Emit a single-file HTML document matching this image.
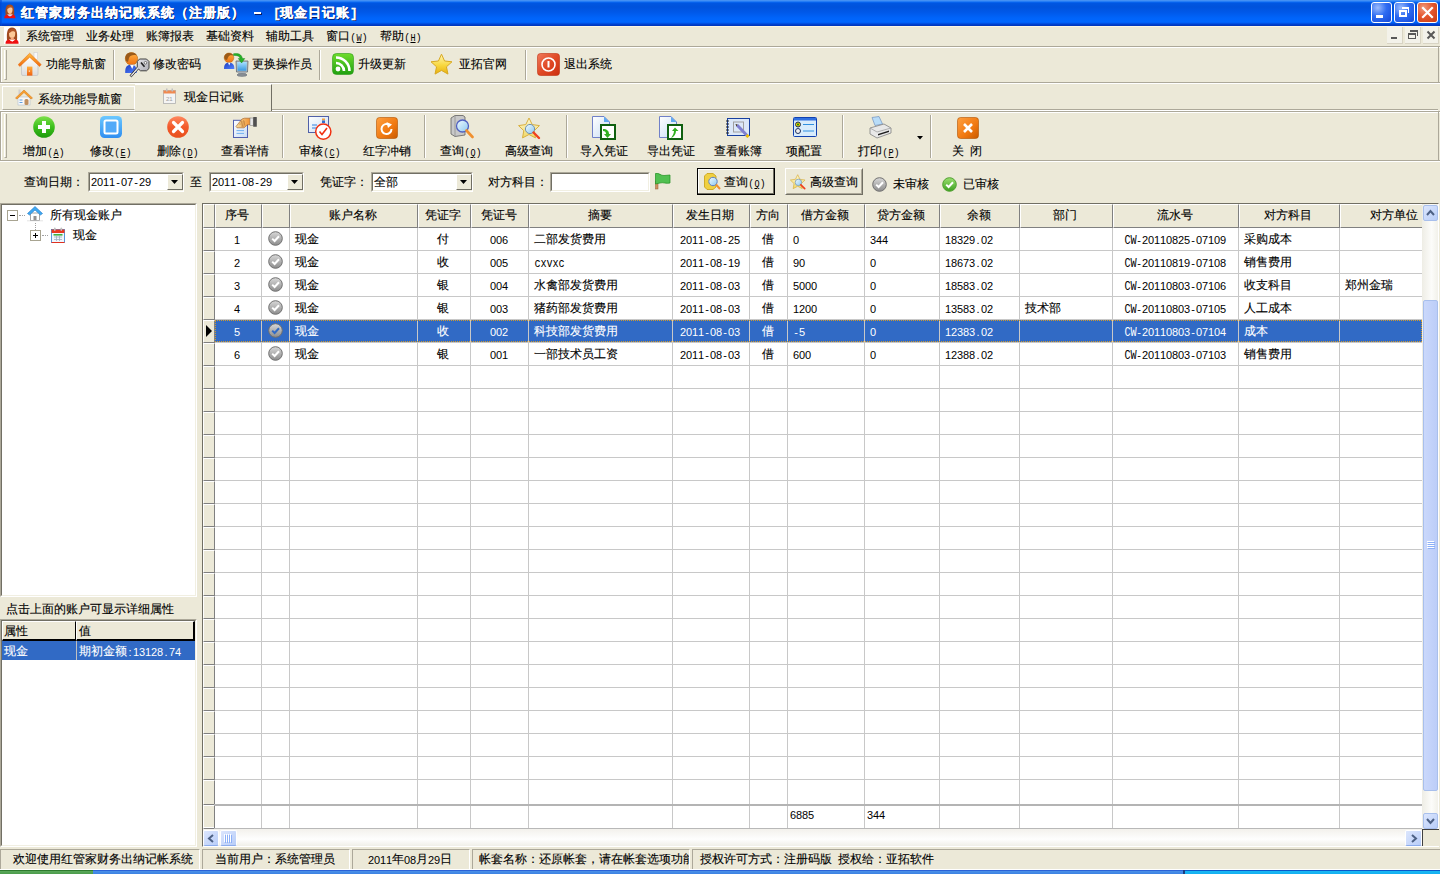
<!DOCTYPE html><html><head><meta charset="utf-8"><style>
html,body{margin:0;padding:0;}
body{width:1440px;height:874px;position:relative;overflow:hidden;background:#ECE9D8;font-family:"Liberation Sans",sans-serif;font-size:12px;color:#000;}
div{position:absolute;box-sizing:border-box;}
.t{white-space:nowrap;line-height:12px;height:12px;-webkit-text-stroke:0.12px currentColor;}
.c{display:inline-block;width:6px;text-align:center;position:relative;top:1px;font-size:11px;-webkit-text-stroke:0;}.m{font-family:'Liberation Mono',monospace;font-size:12px;transform:scaleX(.85);}
svg{position:absolute;}
</style></head><body>
<svg width="0" height="0" style="position:absolute;left:0;top:0">
<defs>
<linearGradient id="gGreen" x1="0" y1="0" x2="0" y2="1"><stop offset="0" stop-color="#7de04a"/><stop offset=".5" stop-color="#3cbf1c"/><stop offset="1" stop-color="#1e9a0c"/></linearGradient>
<linearGradient id="gRss" x1="0" y1="0" x2="0" y2="1"><stop offset="0" stop-color="#6fdc2c"/><stop offset="1" stop-color="#1fa010"/></linearGradient>
<linearGradient id="gBlue" x1="0" y1="0" x2="0" y2="1"><stop offset="0" stop-color="#6cc8ff"/><stop offset="1" stop-color="#2f8ef0"/></linearGradient>
<linearGradient id="gRed" x1="0" y1="0" x2="0" y2="1"><stop offset="0" stop-color="#ff8a60"/><stop offset=".5" stop-color="#f25a2c"/><stop offset="1" stop-color="#e8501c"/></linearGradient>
<linearGradient id="gPower" x1="0" y1="0" x2="1" y2="1"><stop offset="0" stop-color="#f07a5c"/><stop offset=".5" stop-color="#e04a26"/><stop offset="1" stop-color="#cc3010"/></linearGradient>
<linearGradient id="gOrange" x1="0" y1="0" x2="1" y2="1"><stop offset="0" stop-color="#ffa040"/><stop offset=".6" stop-color="#f07810"/><stop offset="1" stop-color="#c85a00"/></linearGradient>
<linearGradient id="gStar" x1="0" y1="0" x2="0" y2="1"><stop offset="0" stop-color="#fff6b8"/><stop offset=".55" stop-color="#f8d840"/><stop offset="1" stop-color="#e8b010"/></linearGradient>
<linearGradient id="gStarL" x1="0" y1="0" x2="0" y2="1"><stop offset="0" stop-color="#fff8d0"/><stop offset="1" stop-color="#f0d868"/></linearGradient>
<linearGradient id="gRoof" x1="0" y1="0" x2="0" y2="1"><stop offset="0" stop-color="#ffc040"/><stop offset="1" stop-color="#f06810"/></linearGradient>
<linearGradient id="gWall" x1="0" y1="0" x2="0" y2="1"><stop offset="0" stop-color="#ffffff"/><stop offset="1" stop-color="#dcdcdc"/></linearGradient>
<linearGradient id="gGray" x1="0" y1="0" x2="0" y2="1"><stop offset="0" stop-color="#d8d8d8"/><stop offset="1" stop-color="#8c8c8c"/></linearGradient>
<linearGradient id="gGreenC" x1="0" y1="0" x2="0" y2="1"><stop offset="0" stop-color="#9be070"/><stop offset="1" stop-color="#3ca020"/></linearGradient>
<linearGradient id="gDoc" x1="0" y1="0" x2="1" y2="1"><stop offset="0" stop-color="#ffffff"/><stop offset="1" stop-color="#c8dcf4"/></linearGradient>
<linearGradient id="gLens" x1="0" y1="0" x2="1" y2="1"><stop offset="0" stop-color="#f0faff"/><stop offset="1" stop-color="#8cc8f0"/></linearGradient>
<linearGradient id="gSB" x1="0" y1="0" x2="1" y2="1"><stop offset="0" stop-color="#dfe8fe"/><stop offset="1" stop-color="#b4c8f6"/></linearGradient>
<linearGradient id="gDoor" x1="0" y1="0" x2="0" y2="1"><stop offset="0" stop-color="#ffb040"/><stop offset="1" stop-color="#f06010"/></linearGradient>
<linearGradient id="gHead" x1="0" y1="0" x2="0" y2="1"><stop offset="0" stop-color="#ffb040"/><stop offset="1" stop-color="#f07010"/></linearGradient>
<linearGradient id="gBody" x1="0" y1="0" x2="1" y2="1"><stop offset="0" stop-color="#2040c0"/><stop offset="1" stop-color="#5080ff"/></linearGradient>
<linearGradient id="gKey" x1="0" y1="0" x2="1" y2="1"><stop offset="0" stop-color="#f4f4f8"/><stop offset="1" stop-color="#a0a0a8"/></linearGradient>
<linearGradient id="gScreen" x1="0" y1="0" x2="0" y2="1"><stop offset="0" stop-color="#a8e0ff"/><stop offset="1" stop-color="#3898e0"/></linearGradient>
<linearGradient id="gHand" x1="0" y1="0" x2="1" y2="0"><stop offset="0" stop-color="#f8e0a0"/><stop offset="1" stop-color="#f09030"/></linearGradient>
</defs></svg>
<div style="left:0;top:0;width:1440px;height:26px;background:linear-gradient(#4a94f4 0px,#3d8cf4 1px,#0c6cf6 2px,#0056e2 3px,#0052dc 7px,#0058e8 12px,#0064fa 18px,#0066ff 22px,#005cf0 23px,#0044d4 24px,#0034b8 26px);"></div>
<div style="left:0;top:0;width:2px;height:26px;background:linear-gradient(90deg,#0040c8,#0050e0 100%);opacity:.6"></div>
<style>.tt{position:absolute;white-space:nowrap;color:#fff;font-weight:bold;font-size:13px;line-height:13px;letter-spacing:1px;-webkit-text-stroke:0.3px #fff;text-shadow:1px 1px 0 #0c1a60;}</style>
<div class="tt" style="left:21px;top:6px">红管家财务出纳记账系统</div>
<div class="tt" style="left:175px;top:6px">（注册版）</div>
<div style="left:254px;top:12px;width:7px;height:2px;background:#fff;box-shadow:1px 1px 0 #0c1a60"></div>
<div class="tt" style="left:273px;top:6px"><span style="font-family:Liberation Mono">[</span></div>
<div class="tt" style="left:280px;top:6px">现金日记账</div>
<div class="tt" style="left:350px;top:6px"><span style="font-family:Liberation Mono">]</span></div>
<div style="left:1371px;top:2px;width:21px;height:21px;border:1px solid #fff;border-radius:3px;background:radial-gradient(circle at 30% 25%,#9cbcfc 0,#2f6df2 45%,#1448d8 100%);"></div>
<div style="left:1394px;top:2px;width:21px;height:21px;border:1px solid #fff;border-radius:3px;background:radial-gradient(circle at 30% 25%,#9cbcfc 0,#2f6df2 45%,#1448d8 100%);"></div>
<div style="left:1417px;top:2px;width:21px;height:21px;border:1px solid #fff;border-radius:3px;background:radial-gradient(circle at 30% 25%,#f09a7c 0,#e5572e 45%,#c83c12 100%);"></div>
<div style="left:1376px;top:15px;width:7px;height:3px;background:#fff"></div>
<div style="left:1399px;top:10px;width:8px;height:7px;border:2px solid #fff;border-top-width:2px"></div>
<div style="left:1402px;top:7px;width:7px;height:6px;border-top:2px solid #fff;border-right:1px solid #fff"></div>
<svg style="left:1417px;top:2px" width="21" height="21"><path d="M6 6 L15 15 M15 6 L6 15" stroke="#fff" stroke-width="2.2" stroke-linecap="square"/></svg>
<div style="left:3px;top:4px;width:14px;height:15px;overflow:hidden"><svg style="left:0px;top:0px" width="14" height="15" viewBox="0 0 14 15"><g transform="scale(0.85)"><path d="M3 13 C2.5 6 3 0.5 8 0.5 C13 0.5 13.5 6 13 13 Z" fill="#a04a1e"/>
<path d="M5 7 C5 3.5 7 2.8 9 2.8 C11 2.8 11.5 5 11.2 7 C11 10 10 11 8.2 11 C6.4 11 5 10 5 7Z" fill="#fcc898"/>
<path d="M4.5 6.5 C5 3 7 1.5 9.5 2 C11.5 2.5 12 4 12.2 6 C11 4.5 9 3.8 7.5 4.5 C6 5.5 5.5 6 4.5 6.5Z" fill="#b05428"/>
<rect x="6.8" y="10.5" width="3" height="2.5" fill="#f8a880"/>
<path d="M1.5 16.8 C1.5 14 2.5 13 5 12.6 L8.2 14.5 L11.4 12.6 C14 13 14.6 14 14.6 16.8 Z" fill="#ee1010"/>
<path d="M5 12.6 L8.2 14.6 L11.4 12.6 L10.5 12.2 L8.2 13.4 L6 12.2Z" fill="#fff"/></g></svg></div>
<div style="left:0px;top:26px;width:1440px;height:1px;background:#faf6e4"></div>
<div style="left:4px;top:27px;width:16px;height:17px;background:#fff"></div>
<svg style="left:4px;top:27px" width="16" height="17" viewBox="0 0 16 17"><path d="M3 13 C2.5 6 3 0.5 8 0.5 C13 0.5 13.5 6 13 13 Z" fill="#a04a1e"/>
<path d="M5 7 C5 3.5 7 2.8 9 2.8 C11 2.8 11.5 5 11.2 7 C11 10 10 11 8.2 11 C6.4 11 5 10 5 7Z" fill="#fcc898"/>
<path d="M4.5 6.5 C5 3 7 1.5 9.5 2 C11.5 2.5 12 4 12.2 6 C11 4.5 9 3.8 7.5 4.5 C6 5.5 5.5 6 4.5 6.5Z" fill="#b05428"/>
<rect x="6.8" y="10.5" width="3" height="2.5" fill="#f8a880"/>
<path d="M1.5 16.8 C1.5 14 2.5 13 5 12.6 L8.2 14.5 L11.4 12.6 C14 13 14.6 14 14.6 16.8 Z" fill="#ee1010"/>
<path d="M5 12.6 L8.2 14.6 L11.4 12.6 L10.5 12.2 L8.2 13.4 L6 12.2Z" fill="#fff"/></svg>
<div class="t" style="left:26px;top:30px;">系统管理</div>
<div class="t" style="left:86px;top:30px;">业务处理</div>
<div class="t" style="left:146px;top:30px;">账簿报表</div>
<div class="t" style="left:206px;top:30px;">基础资料</div>
<div class="t" style="left:266px;top:30px;">辅助工具</div>
<div class="t" style="left:326px;top:30px;">窗口<span class="c" style="font-size:10px">(</span><span class="c m" style="text-decoration:underline;font-size:10px">W</span><span class="c" style="font-size:10px">)</span></div>
<div class="t" style="left:380px;top:30px;">帮助<span class="c" style="font-size:10px">(</span><span class="c m" style="text-decoration:underline;font-size:10px">H</span><span class="c" style="font-size:10px">)</span></div>
<div style="left:1387px;top:27px;width:16px;height:17px;background:#f3f2ea;border-right:1px solid #d8d4c4;border-bottom:1px solid #d8d4c4;"></div>
<div style="left:1405px;top:27px;width:16px;height:17px;background:#f3f2ea;border-right:1px solid #d8d4c4;border-bottom:1px solid #d8d4c4;"></div>
<div style="left:1423px;top:27px;width:16px;height:17px;background:#f3f2ea;border-right:1px solid #d8d4c4;border-bottom:1px solid #d8d4c4;"></div>
<div style="left:1391px;top:37px;width:6px;height:2px;background:#585858"></div>
<div style="left:1408px;top:33px;width:8px;height:6px;border:2px solid #585858;border-width:2px 1px 1px 1px"></div>
<div style="left:1410px;top:30px;width:8px;height:6px;border-top:2px solid #585858;border-right:1px solid #585858"></div>
<svg style="left:1423px;top:27px" width="16" height="17"><path d="M4.5 4.5 L11.5 11.5 M11.5 4.5 L4.5 11.5" stroke="#585858" stroke-width="2"/></svg>
<div style="left:0px;top:46px;width:1440px;height:1px;background:#aca899"></div>
<div style="left:0px;top:46px;width:1px;height:36px;background:#aca899"></div>
<div style="left:1px;top:47px;width:1439px;height:1px;background:#fff"></div>
<div style="left:1px;top:47px;width:1px;height:35px;background:#fff"></div>
<div style="left:0px;top:82px;width:1440px;height:1px;background:#aca899"></div>
<div style="left:0px;top:83px;width:1440px;height:1px;background:#fff"></div>
<div style="left:1438px;top:46px;width:1px;height:36px;background:#aca899"></div>
<div style="left:4px;top:50px;width:3px;height:30px;border-left:1px solid #fff;border-right:1px solid #aca899;border-bottom:1px solid #aca899;"></div>
<div class="t" style="left:46px;top:58px;">功能导航窗</div>
<div class="t" style="left:153px;top:58px;">修改密码</div>
<div class="t" style="left:252px;top:58px;">更换操作员</div>
<div class="t" style="left:358px;top:58px;">升级更新</div>
<div class="t" style="left:459px;top:58px;">亚拓官网</div>
<div class="t" style="left:564px;top:58px;">退出系统</div>
<svg style="left:18px;top:52px" width="24" height="24" viewBox="0 0 24 24"><rect x="16" y="0.5" width="3.6" height="7" fill="#f8f8f8" stroke="#d0d0d0" stroke-width=".6"/>
<path d="M3.5 11 L12 4 L20 11 L20 22 Q20 23.6 18.4 23.6 L5.1 23.6 Q3.5 23.6 3.5 22 Z" fill="url(#gWall)" stroke="#c0c0c0" stroke-width=".7"/>
<path d="M0.2 12.6 L11.7 1.2 L23.2 12.6 L21.6 14.4 L11.7 5.2 L1.8 14.4 Z" fill="url(#gRoof)" stroke="#e87018" stroke-width=".6" stroke-linejoin="round"/>
<rect x="9" y="14.6" width="5.4" height="9" fill="url(#gDoor)"/><rect x="10.8" y="18.5" width="1" height="1.2" fill="#fff"/></svg>
<svg style="left:120px;top:50px" width="32" height="28" viewBox="0 0 32 28"><circle cx="11.5" cy="8.8" r="6.2" fill="url(#gHead)" stroke="#b86a10" stroke-width=".6"/>
<path d="M5.4 9 C5 4 8 2.6 11.5 2.6 C14 2.6 16.2 3.6 16.8 5.5 C14 4.5 10 5 9 8 L8 12 L6 11Z" fill="#9a5a18"/>
<path d="M5.2 23 C5 17.5 6.5 14.8 11 14.8 C15 14.8 16.8 16.5 16.8 23 Z" fill="url(#gBody)"/>
<path d="M10 14.8 L12.2 19 L14 14.8Z" fill="#fff"/>
<path d="M19.5 9 L26.5 9 L29 11.5 L29 18.5 L26.5 20.8 L20.5 20.8 L18.5 19 L11.5 26.8 L10 25.5 L17.3 17 L17.3 11.5 Z" fill="url(#gKey)" stroke="#303030" stroke-width=".9" stroke-linejoin="round"/>
<path d="M21 12.5 L24.5 16.8" stroke="#202020" stroke-width="1.6"/>
<circle cx="25.5" cy="12.8" r="1.3" fill="#fff" stroke="#303030" stroke-width=".6"/>
<path d="M12 25.2 L17.6 18.6" stroke="#fff" stroke-width="1" stroke-dasharray="1 1"/></svg>
<svg style="left:223px;top:52px" width="26" height="25" viewBox="0 0 26 25"><circle cx="6" cy="5.8" r="4.8" fill="url(#gHead)" stroke="#b86a10" stroke-width=".5"/>
<path d="M1.3 6 C1 2.5 3.5 1 6 1 C8 1 9.8 2 10.3 3.6 C8 3 6 3.2 5 5.5 L4 8 L2 7.5Z" fill="#9a5a18"/>
<path d="M1 17 C1 12.5 2.5 10.8 6 10.8 C9.5 10.8 11.4 12.5 11.4 17 Z" fill="url(#gBody)"/>
<path d="M5 10.8 L6.2 13.5 L7.4 10.8Z" fill="#fff"/>
<path d="M13 9 L25 9 L24.5 20 L13.5 20 Z" fill="#b8c0c8" stroke="#606870" stroke-width=".8"/>
<path d="M14.2 10 L23.8 10 L23.4 18.8 L14.6 18.8 Z" fill="url(#gScreen)"/>
<path d="M15.5 20 L22.5 20 L23 22.5 L15 22.5Z" fill="#a8aeb4"/>
<ellipse cx="19" cy="23" rx="5" ry="1.4" fill="#8a9096" stroke="#606870" stroke-width=".5"/>
<path d="M10.5 1.8 C15 1 18.5 2 19.5 6.5 L21.8 6.5 L18.6 11 L15.2 6.5 L17.2 6.5 C16.5 4.2 14.5 3.2 10.5 3.5Z" fill="#28b028" stroke="#108010" stroke-width=".4"/></svg>
<svg style="left:332px;top:53px" width="22" height="22" viewBox="0 0 22 22"><rect x="0.5" y="0.5" width="21" height="21" rx="4" fill="url(#gRss)" stroke="#2a9a18" stroke-width=".6"/>
<circle cx="6" cy="16" r="2.4" fill="#fff"/>
<path d="M4 10 A8 8 0 0 1 12 18" stroke="#fff" stroke-width="2.6" fill="none"/>
<path d="M4 4.5 A13.5 13.5 0 0 1 17.5 18" stroke="#fff" stroke-width="2.6" fill="none"/></svg>
<svg style="left:430px;top:53px" width="23" height="23" viewBox="0 0 23 23"><g transform="scale(1.0)"><polygon points="11.50,1.20 14.56,7.99 21.96,8.80 16.45,13.81 17.97,21.10 11.50,17.40 5.03,21.10 6.55,13.81 1.04,8.80 8.44,7.99" fill="url(#gStar)" stroke="#d8a820" stroke-width="1" stroke-linejoin="round"/></g></svg>
<svg style="left:537px;top:53px" width="23" height="23" viewBox="0 0 23 23"><rect x="0.5" y="0.5" width="22" height="22" rx="3" fill="url(#gPower)" stroke="#c03010" stroke-width=".6"/>
<circle cx="11.5" cy="11.5" r="6.5" fill="none" stroke="#fff" stroke-width="1.6"/>
<rect x="10.5" y="8" width="2" height="6.5" fill="#fff"/></svg>
<div style="left:113px;top:50px;width:2px;height:30px;border-left:1px solid #aca899;border-right:1px solid #fff;"></div>
<div style="left:319px;top:50px;width:2px;height:30px;border-left:1px solid #aca899;border-right:1px solid #fff;"></div>
<div style="left:525px;top:50px;width:2px;height:30px;border-left:1px solid #aca899;border-right:1px solid #fff;"></div>
<div style="left:272px;top:109px;width:1166px;height:1px;background:#aca899"></div>
<div style="left:272px;top:110px;width:1166px;height:1px;background:#fff"></div>
<div style="left:2px;top:86px;width:133px;height:24px;border:1px solid;border-color:#fff #fff #aca899 #fff;"></div>
<div class="t" style="left:38px;top:93px;">系统功能导航窗</div>
<svg style="left:15px;top:89px" width="18" height="17" viewBox="0 0 18 17"><rect x="3" y="8" width="12" height="8" fill="#f8f8f8" stroke="#b0c0d0" stroke-width=".6"/>
<rect x="9.5" y="10" width="4" height="6" rx="1.5" fill="#c09060"/>
<path d="M4.5 11 H7.5 M4.5 13.5 H7.5" stroke="#60a0e0" stroke-width="1.2"/>
<rect x="3.5" y="0.5" width="2" height="5" fill="#d0d0d0"/>
<path d="M0.5 9 L9 1 L17.5 9 L16 10 L9 3.5 L2 10Z" fill="#f8a030" stroke="#d07010" stroke-width=".5"/></svg>
<div style="left:135px;top:84px;width:137px;height:27px;background:#ECE9D8;border-top:1px solid #fff;border-right:1px solid #716f64;"></div>
<div style="left:0px;top:110px;width:135px;height:1px;background:#fff"></div>
<div class="t" style="left:184px;top:91px;">现金日记账</div>
<svg style="left:163px;top:88px" width="13" height="16" viewBox="0 0 13 16"><rect x="0.5" y="2.5" width="12" height="13" fill="#f4f4f4" stroke="#b0b0b0" stroke-width=".8"/>
<rect x="0.5" y="2.5" width="12" height="3" fill="#f08a50"/>
<rect x="3" y="0.5" width="1.5" height="3" fill="#c0c0c0"/><rect x="8.5" y="0.5" width="1.5" height="3" fill="#c0c0c0"/>
<text x="3" y="13" font-size="6" fill="#a0a0a0" font-family="Liberation Sans">21</text></svg>
<div style="left:0px;top:111px;width:1440px;height:1px;background:#aca899"></div>
<div style="left:0px;top:111px;width:1px;height:49px;background:#aca899"></div>
<div style="left:1px;top:112px;width:1439px;height:1px;background:#fff"></div>
<div style="left:1px;top:112px;width:1px;height:48px;background:#fff"></div>
<div style="left:0px;top:160px;width:1440px;height:1px;background:#aca899"></div>
<div style="left:0px;top:161px;width:1440px;height:1px;background:#fff"></div>
<div style="left:1438px;top:111px;width:1px;height:49px;background:#aca899"></div>
<div style="left:4px;top:114px;width:3px;height:44px;border-left:1px solid #fff;border-right:1px solid #aca899;border-bottom:1px solid #aca899;"></div>
<div class="t" style="left:23px;top:145px">增加<span class="c" style="font-size:10px">(</span><span class="c m" style="text-decoration:underline;font-size:10px">A</span><span class="c" style="font-size:10px">)</span></div>
<div class="t" style="left:90px;top:145px">修改<span class="c" style="font-size:10px">(</span><span class="c m" style="text-decoration:underline;font-size:10px">E</span><span class="c" style="font-size:10px">)</span></div>
<div class="t" style="left:157px;top:145px">删除<span class="c" style="font-size:10px">(</span><span class="c m" style="text-decoration:underline;font-size:10px">D</span><span class="c" style="font-size:10px">)</span></div>
<div class="t" style="left:221px;top:145px">查看详情</div>
<div class="t" style="left:299px;top:145px">审核<span class="c" style="font-size:10px">(</span><span class="c m" style="text-decoration:underline;font-size:10px">C</span><span class="c" style="font-size:10px">)</span></div>
<div class="t" style="left:363px;top:145px">红字冲销</div>
<div class="t" style="left:440px;top:145px">查询<span class="c" style="font-size:10px">(</span><span class="c m" style="text-decoration:underline;font-size:10px">Q</span><span class="c" style="font-size:10px">)</span></div>
<div class="t" style="left:505px;top:145px">高级查询</div>
<div class="t" style="left:580px;top:145px">导入凭证</div>
<div class="t" style="left:647px;top:145px">导出凭证</div>
<div class="t" style="left:714px;top:145px">查看账簿</div>
<div class="t" style="left:786px;top:145px">项配置</div>
<div class="t" style="left:858px;top:145px">打印<span class="c" style="font-size:10px">(</span><span class="c m" style="text-decoration:underline;font-size:10px">P</span><span class="c" style="font-size:10px">)</span></div>
<div class="t" style="left:952px;top:145px">关<span style="display:inline-block;width:6px"></span>闭</div>
<svg style="left:33px;top:116px" width="22" height="22" viewBox="0 0 22 22"><circle cx="11" cy="11" r="10.8" fill="url(#gGreen)"/>
<path d="M9 5 H13 V9 H17 V13 H13 V17 H9 V13 H5 V9 H9Z" fill="#fff"/></svg>
<svg style="left:100px;top:116px" width="22" height="22" viewBox="0 0 22 22"><rect x="0" y="0" width="22" height="22" rx="4.5" fill="url(#gBlue)"/>
<rect x="4.5" y="4.5" width="13" height="13" rx="1.5" fill="#52aaf8" stroke="#fff" stroke-width="2"/></svg>
<svg style="left:167px;top:116px" width="22" height="22" viewBox="0 0 22 22"><circle cx="11" cy="11" r="10.8" fill="url(#gRed)"/>
<path d="M6.5 6.5 L15.5 15.5 M15.5 6.5 L6.5 15.5" stroke="#fff" stroke-width="3.2" stroke-linecap="round"/></svg>
<svg style="left:228px;top:112px" width="30" height="28" viewBox="0 0 30 28"><rect x="5.5" y="8.3" width="14" height="17.2" fill="url(#gDoc)" stroke="#5060b0" stroke-width="1"/>
<path d="M8.5 18.6 H16 M8.5 21.4 H16" stroke="#70b0f0" stroke-width="1"/>
<path d="M8 14.5 L14 7 L16.5 6.2 L22.5 6.2 L22.5 12.5 L19.5 12.8 L16 15.8 L9 15.8 Z" fill="url(#gHand)" stroke="#a05a20" stroke-width=".6" stroke-linejoin="round"/>
<path d="M11 12 L17 12 M12.5 10 L17 10 M13 14 L16 14 M13 8.5 L15 15 M15.5 8 L17 14" stroke="#b07030" stroke-width=".5"/>
<rect x="22" y="6" width="3.2" height="7.5" fill="#e8e8e8" stroke="#707070" stroke-width=".5"/>
<rect x="25.2" y="5" width="3.6" height="9.8" rx=".5" fill="#505050"/></svg>
<svg style="left:308px;top:116px" width="24" height="24" viewBox="0 0 24 24"><rect x="0.5" y="0.5" width="20" height="16" fill="url(#gDoc)" stroke="#5060a8" stroke-width="1"/>
<path d="M4 9 H9 M4 12 H9" stroke="#3080e0" stroke-width="1"/>
<rect x="14" y="2.5" width="3" height="2" fill="#f0a040"/><rect x="14" y="4.5" width="3" height="2.5" fill="#3070d0"/>
<circle cx="15.3" cy="15.6" r="7.6" fill="#fff" stroke="#f03010" stroke-width="1.5"/>
<path d="M11.5 15.5 L14 18.5 L19 12" stroke="#f03010" stroke-width="1.6" fill="none"/></svg>
<svg style="left:376px;top:117px" width="22" height="22" viewBox="0 0 22 22"><rect x="0.5" y="0.5" width="21" height="21" rx="3" fill="url(#gOrange)" stroke="#b05000" stroke-width=".6"/>
<path d="M13.5 8 A5 5 0 1 0 15.5 12" stroke="#fff" stroke-width="2" fill="none"/>
<path d="M10.5 5 L16 7.5 L12 11 Z" fill="#fff"/></svg>
<svg style="left:450px;top:115px" width="24" height="24" viewBox="0 0 24 24"><path d="M1 3 L5 0.5 L13 0.5 L15 2 L15 20 L5 21.5 L1 19 Z" fill="#c8c8c8" stroke="#606060" stroke-width=".8"/>
<path d="M5 0.5 L5 21.5" stroke="#909090" stroke-width=".8"/>
<circle cx="12.5" cy="11" r="6" fill="url(#gLens)" stroke="#5060c0" stroke-width="1.3"/>
<path d="M16.5 15.5 L22.5 22" stroke="#f09030" stroke-width="2.6" stroke-linecap="round"/></svg>
<svg style="left:518px;top:117px" width="23" height="23" viewBox="0 0 23 23"><polygon points="11.00,1.00 14.23,7.55 21.46,8.60 16.23,13.70 17.47,20.90 11.00,17.50 4.53,20.90 5.77,13.70 0.54,8.60 7.77,7.55" fill="url(#gStarL)" stroke="#d8b040" stroke-width="1" stroke-linejoin="round"/>
<circle cx="12" cy="12" r="4.6" fill="url(#gLens)" stroke="#7090b0" stroke-width="1"/>
<path d="M15.5 15.5 L21 21" stroke="#f04020" stroke-width="2.4" stroke-linecap="round"/></svg>
<svg style="left:592px;top:116px" width="24" height="24" viewBox="0 0 24 24"><path d="M0.5 0.5 L12 0.5 L17.5 6 L17.5 21.5 L0.5 21.5Z" fill="url(#gDoc)" stroke="#7080c8" stroke-width="1"/>
<path d="M12 0.5 L12 6 L17.5 6Z" fill="#60a8f0"/>
<rect x="9" y="9" width="14" height="14" fill="#fff" stroke="#106010" stroke-width="2"/><path d="M11 13 C15 13 17 15 17 18 L19 18 L15.5 22 L12 18 L14 18 C14 16 13 15 11 15Z" fill="#30b020"/></svg>
<svg style="left:659px;top:116px" width="24" height="24" viewBox="0 0 24 24"><path d="M0.5 0.5 L12 0.5 L17.5 6 L17.5 21.5 L0.5 21.5Z" fill="url(#gDoc)" stroke="#7080c8" stroke-width="1"/>
<path d="M12 0.5 L12 6 L17.5 6Z" fill="#60a8f0"/>
<rect x="9" y="9" width="14" height="14" fill="#fff" stroke="#106010" stroke-width="2"/><path d="M12 22 C14 19 15 17 15 15 L13 15 L16 11.5 L19.5 15 L17 15 C17 18 15 21 12 22Z" fill="#30b020"/></svg>
<svg style="left:726px;top:118px" width="24" height="21" viewBox="0 0 24 21"><rect x="1.5" y="0.5" width="22" height="17" fill="#dce8f8" stroke="#1840a0" stroke-width="1"/>
<path d="M0 3 H3 M0 6 H3 M0 9 H3 M0 12 H3 M0 15 H3" stroke="#202020" stroke-width="1.2"/>
<rect x="7.5" y="4" width="10" height="10" fill="none" stroke="#a0a0a0" stroke-width="1"/>
<path d="M11 7 L22 18.5" stroke="#8080d0" stroke-width="3"/><path d="M20.5 17 L22.5 19" stroke="#f0c000" stroke-width="3"/>
<path d="M9.5 6 L11.5 6.5 L10.5 8.5Z" fill="#403010"/></svg>
<svg style="left:793px;top:117px" width="24" height="20" viewBox="0 0 24 20"><rect x="0.5" y="0.5" width="23" height="19" rx="1" fill="#d8ecfc" stroke="#1040b0" stroke-width="1"/>
<rect x="1" y="1" width="22" height="2.5" fill="#3070e0"/>
<circle cx="5" cy="7.5" r="2.5" fill="#f0d000" stroke="#203060" stroke-width="1"/><circle cx="5" cy="7.5" r="1" fill="#108010"/>
<circle cx="5" cy="14" r="2.5" fill="#f0f0f0" stroke="#203060" stroke-width="1"/>
<path d="M10 7.5 H21 M10 14 H21" stroke="#3090e0" stroke-width="1"/></svg>
<svg style="left:869px;top:116px" width="23" height="23" viewBox="0 0 23 23"><path d="M3 1.5 L10 0.5 L13.5 8 L6 9.5 Z" fill="#b8dcf8" stroke="#7090c0" stroke-width=".7"/>
<path d="M1 12 L15 8 L22 12 L22 17 L8 22 L1 18 Z" fill="#e8e8e8" stroke="#808080" stroke-width=".8"/>
<path d="M1 12 L8 16 L22 12" stroke="#a0a0a0" stroke-width=".8" fill="none"/>
<path d="M9 18 L20 14.5 L20 16 L9 19.5Z" fill="#202020"/></svg>
<svg style="left:917px;top:136px" width="7" height="4" viewBox="0 0 7 4"><path d="M0 0 H6 L3 3.5Z" fill="#000"/></svg>
<svg style="left:957px;top:117px" width="22" height="22" viewBox="0 0 22 22"><rect x="0.5" y="0.5" width="21" height="21" rx="3" fill="url(#gOrange)" stroke="#b05000" stroke-width=".6"/>
<path d="M7 7 L15 15 M15 7 L7 15" stroke="#fff" stroke-width="2.6"/></svg>
<div style="left:282px;top:115px;width:2px;height:43px;border-left:1px solid #aca899;border-right:1px solid #fff;"></div>
<div style="left:424px;top:115px;width:2px;height:43px;border-left:1px solid #aca899;border-right:1px solid #fff;"></div>
<div style="left:566px;top:115px;width:2px;height:43px;border-left:1px solid #aca899;border-right:1px solid #fff;"></div>
<div style="left:842px;top:115px;width:2px;height:43px;border-left:1px solid #aca899;border-right:1px solid #fff;"></div>
<div style="left:930px;top:115px;width:2px;height:43px;border-left:1px solid #aca899;border-right:1px solid #fff;"></div>
<div class="t" style="left:24px;top:176px;">查询日期：</div>
<div style="left:88px;top:172px;width:96px;height:20px;background:#fff;border:1px solid;border-color:#aca899 #fff #fff #aca899;"></div>
<div style="left:89px;top:173px;width:94px;height:18px;border:1px solid;border-color:#716f64 #f1efe2 #f1efe2 #716f64;"></div>
<div class="t" style="left:91px;top:175px;"><span class="c">2</span><span class="c">0</span><span class="c">1</span><span class="c">1</span><span class="c">-</span><span class="c">0</span><span class="c">7</span><span class="c">-</span><span class="c">2</span><span class="c">9</span></div>
<div style="left:167px;top:174px;width:16px;height:16px;background:#ece9d8;border:1px solid;border-color:#fff #716f64 #716f64 #fff;"></div>
<svg style="left:171px;top:180px" width="8" height="4"><path d="M0 0 H7 L3.5 4 Z" fill="#000"/></svg>
<div class="t" style="left:190px;top:176px;">至</div>
<div style="left:209px;top:172px;width:95px;height:20px;background:#fff;border:1px solid;border-color:#aca899 #fff #fff #aca899;"></div>
<div style="left:210px;top:173px;width:93px;height:18px;border:1px solid;border-color:#716f64 #f1efe2 #f1efe2 #716f64;"></div>
<div class="t" style="left:212px;top:175px;"><span class="c">2</span><span class="c">0</span><span class="c">1</span><span class="c">1</span><span class="c">-</span><span class="c">0</span><span class="c">8</span><span class="c">-</span><span class="c">2</span><span class="c">9</span></div>
<div style="left:287px;top:174px;width:16px;height:16px;background:#ece9d8;border:1px solid;border-color:#fff #716f64 #716f64 #fff;"></div>
<svg style="left:291px;top:180px" width="8" height="4"><path d="M0 0 H7 L3.5 4 Z" fill="#000"/></svg>
<div class="t" style="left:320px;top:176px;">凭证字：</div>
<div style="left:371px;top:172px;width:102px;height:20px;background:#fff;border:1px solid;border-color:#aca899 #fff #fff #aca899;"></div>
<div style="left:372px;top:173px;width:100px;height:18px;border:1px solid;border-color:#716f64 #f1efe2 #f1efe2 #716f64;"></div>
<div class="t" style="left:374px;top:176px;">全部</div>
<div style="left:456px;top:174px;width:16px;height:16px;background:#ece9d8;border:1px solid;border-color:#fff #716f64 #716f64 #fff;"></div>
<svg style="left:460px;top:180px" width="8" height="4"><path d="M0 0 H7 L3.5 4 Z" fill="#000"/></svg>
<div class="t" style="left:488px;top:176px;">对方科目：</div>
<div style="left:550px;top:172px;width:100px;height:20px;background:#fff;border:1px solid;border-color:#aca899 #fff #fff #aca899;"></div>
<div style="left:551px;top:173px;width:98px;height:18px;border:1px solid;border-color:#716f64 #f1efe2 #f1efe2 #716f64;"></div>
<div style="left:697px;top:168px;width:78px;height:27px;border:1px solid #000;background:#ece9d8;box-shadow:inset -1px -1px 0 #716f64, inset 1px 1px 0 #fff;"></div>
<div class="t" style="left:724px;top:176px;">查询<span class="c" style="font-size:10px">(</span><span class="c m" style="text-decoration:underline;font-size:10px">Q</span><span class="c" style="font-size:10px">)</span></div>
<svg style="left:704px;top:173px" width="17" height="17" viewBox="0 0 17 17"><path d="M3 0.5 L9 0.5 L12 3 L12 14 L9 16.5 L3 16.5 L0.5 14 L0.5 3Z" fill="#f0d040" stroke="#c8a010" stroke-width=".8"/>
<circle cx="9" cy="8.5" r="4.2" fill="url(#gLens)" stroke="#6080c0" stroke-width="1"/>
<path d="M12 11.5 L16 16" stroke="#f09030" stroke-width="2"/></svg>
<svg style="left:655px;top:173px" width="16" height="17" viewBox="0 0 16 17"><rect x="0.5" y="8" width="2.5" height="8" fill="#d09060" stroke="#906030" stroke-width=".5"/>
<path d="M0.5 0.5 C4 -0.5 6 3 9 2.5 L15 2 L15 10 C11 11 8 9 5 10 L0.5 11 Z" fill="#50c050" stroke="#209020" stroke-width=".7"/></svg>
<div style="left:785px;top:168px;width:78px;height:27px;border:1px solid;border-color:#fff #716f64 #716f64 #fff;"></div>
<div style="left:786px;top:169px;width:76px;height:25px;border:1px solid;border-color:#ece9d8 #aca899 #aca899 #ece9d8;"></div>
<div class="t" style="left:810px;top:176px;">高级查询</div>
<div style="left:790px;top:174px;width:16px;height:16px;overflow:hidden"><svg style="left:0px;top:0px" width="16" height="16" viewBox="0 0 16 16"><g transform="scale(0.7)"><polygon points="11.00,1.00 14.23,7.55 21.46,8.60 16.23,13.70 17.47,20.90 11.00,17.50 4.53,20.90 5.77,13.70 0.54,8.60 7.77,7.55" fill="url(#gStarL)" stroke="#d8b040" stroke-width="1" stroke-linejoin="round"/>
<circle cx="12" cy="12" r="4.6" fill="url(#gLens)" stroke="#7090b0" stroke-width="1"/>
<path d="M15.5 15.5 L21 21" stroke="#f04020" stroke-width="2.4" stroke-linecap="round"/></g></svg></div>
<svg style="left:872px;top:177px" width="15" height="15" viewBox="0 0 15 15"><circle cx="7.5" cy="7.5" r="6.8" fill="url(#gGray)" stroke="#707070" stroke-width="1"/>
<path d="M4.2 7.6 L6.6 10 L11 5.2" stroke="#fff" stroke-width="2" fill="none"/></svg>
<svg style="left:942px;top:177px" width="15" height="15" viewBox="0 0 15 15"><circle cx="7.5" cy="7.5" r="6.8" fill="url(#gGreenC)" stroke="#50a030" stroke-width="1"/>
<path d="M4.2 7.6 L6.6 10 L11 5.2" stroke="#fff" stroke-width="2" fill="none"/></svg>
<div class="t" style="left:893px;top:178px;">未审核</div>
<div class="t" style="left:963px;top:178px;">已审核</div>
<div style="left:0px;top:203px;width:197px;height:394px;background:#fff;border:1px solid;border-color:#aca899 #fff #fff #aca899;"></div>
<div style="left:1px;top:204px;width:195px;height:392px;border:1px solid;border-color:#716f64 #f1efe2 #f1efe2 #716f64;"></div>
<div class="t" style="left:50px;top:209px;">所有现金账户</div>
<div class="t" style="left:73px;top:229px;">现金</div>
<svg style="left:7px;top:210px" width="11" height="11" viewBox="0 0 11 11"><rect x="0.5" y="0.5" width="10" height="10" fill="#fff" stroke="#a8a491" stroke-width="1"/><path d="M3 5.5 H8" stroke="#000" stroke-width="1"/></svg>
<svg style="left:30px;top:230px" width="11" height="11" viewBox="0 0 11 11"><rect x="0.5" y="0.5" width="10" height="10" fill="#fff" stroke="#a8a491" stroke-width="1"/><path d="M3 5.5 H8" stroke="#000" stroke-width="1"/><path d="M5.5 3 V8" stroke="#000" stroke-width="1"/></svg>
<svg style="left:27px;top:206px" width="16" height="16" viewBox="0 0 16 16"><rect x="3.5" y="7" width="9" height="7.5" fill="#fff" stroke="#909090" stroke-width=".8"/>
<rect x="6.5" y="10" width="3" height="4.5" fill="#909090"/>
<path d="M0.5 7.5 L8 0.5 L15.5 7.5 L13.5 9 L8 4 L2.5 9Z" fill="#40a8f0" stroke="#2078c8" stroke-width=".6"/>
<path d="M0 14.8 H16" stroke="#d0d0d0" stroke-width=".6"/></svg>
<svg style="left:51px;top:227px" width="14" height="16" viewBox="0 0 14 16"><rect x="0.5" y="2.5" width="13" height="13" fill="#f0f6fc" stroke="#3080d0" stroke-width=".8"/>
<rect x="0.5" y="2.5" width="13" height="3.5" fill="#e83820"/>
<rect x="2.5" y="7" width="9" height="1.6" fill="#40b040"/>
<path d="M3 10 H11 M3 12.5 H11" stroke="#a0b0c0" stroke-width=".8"/><path d="M5.5 9 V14 M8.5 9 V14" stroke="#a0b0c0" stroke-width=".8"/>
<rect x="3" y="0.5" width="1.6" height="3.5" rx=".8" fill="#c0c0c0"/><rect x="9.5" y="0.5" width="1.6" height="3.5" rx=".8" fill="#c0c0c0"/>
<path d="M0.5 15.5 H13.5" stroke="#e03020" stroke-width="1"/></svg>
<div style="left:19px;top:215px;width:6px;border-top:1px dotted #a0a0a0"></div>
<div style="left:42px;top:235px;width:6px;border-top:1px dotted #a0a0a0"></div>
<div style="left:35px;top:223px;height:7px;border-left:1px dotted #a0a0a0"></div>
<div class="t" style="left:6px;top:603px;">点击上面的账户可显示详细属性</div>
<div style="left:0px;top:619px;width:197px;height:228px;background:#fff;border:1px solid;border-color:#aca899 #fff #fff #aca899;"></div>
<div style="left:1px;top:620px;width:195px;height:226px;border:1px solid;border-color:#716f64 #f1efe2 #f1efe2 #716f64;"></div>
<div style="left:2px;top:621px;width:193px;height:20px;background:#ece9d8;"></div>
<div style="left:2px;top:621px;width:74px;height:20px;border:1px solid;border-color:#fff #000 #000 #fff;border-bottom-width:2px;"></div>
<div style="left:76px;top:621px;width:119px;height:20px;border:1px solid;border-color:#fff #000 #000 #fff;border-bottom-width:2px;border-right-width:2px;"></div>
<div class="t" style="left:4px;top:625px;">属性</div>
<div class="t" style="left:79px;top:625px;">值</div>
<div style="left:2px;top:641px;width:193px;height:19px;background:#316ac5;"></div>
<div style="left:76px;top:641px;width:1px;height:19px;background:#c0c0c0"></div>
<div class="t" style="left:4px;top:645px;color:#fff">现金</div>
<div class="t" style="left:79px;top:645px;color:#fff">期初金额<span class="c">:</span><span class="c">1</span><span class="c">3</span><span class="c">1</span><span class="c">2</span><span class="c">8</span><span class="c">.</span><span class="c">7</span><span class="c">4</span></div>
<div style="left:202px;top:203px;width:1237px;height:644px;background:#fff;border:1px solid;border-color:#716f64 #fff #fff #716f64;"></div>
<div style="left:203px;top:204px;width:1219px;height:23px;background:#ece9d8"></div>
<div style="left:203px;top:204px;width:11px;height:623px;background:#ece9d8"></div>
<div style="left:214px;top:250px;width:1208px;height:1px;background:#c8c8c8"></div>
<div style="left:214px;top:273px;width:1208px;height:1px;background:#c8c8c8"></div>
<div style="left:214px;top:296px;width:1208px;height:1px;background:#c8c8c8"></div>
<div style="left:214px;top:319px;width:1208px;height:1px;background:#c8c8c8"></div>
<div style="left:214px;top:342px;width:1208px;height:1px;background:#c8c8c8"></div>
<div style="left:214px;top:365px;width:1208px;height:1px;background:#c8c8c8"></div>
<div style="left:214px;top:388px;width:1208px;height:1px;background:#c8c8c8"></div>
<div style="left:214px;top:411px;width:1208px;height:1px;background:#c8c8c8"></div>
<div style="left:214px;top:434px;width:1208px;height:1px;background:#c8c8c8"></div>
<div style="left:214px;top:457px;width:1208px;height:1px;background:#c8c8c8"></div>
<div style="left:214px;top:480px;width:1208px;height:1px;background:#c8c8c8"></div>
<div style="left:214px;top:503px;width:1208px;height:1px;background:#c8c8c8"></div>
<div style="left:214px;top:526px;width:1208px;height:1px;background:#c8c8c8"></div>
<div style="left:214px;top:549px;width:1208px;height:1px;background:#c8c8c8"></div>
<div style="left:214px;top:572px;width:1208px;height:1px;background:#c8c8c8"></div>
<div style="left:214px;top:595px;width:1208px;height:1px;background:#c8c8c8"></div>
<div style="left:214px;top:618px;width:1208px;height:1px;background:#c8c8c8"></div>
<div style="left:214px;top:641px;width:1208px;height:1px;background:#c8c8c8"></div>
<div style="left:214px;top:664px;width:1208px;height:1px;background:#c8c8c8"></div>
<div style="left:214px;top:687px;width:1208px;height:1px;background:#c8c8c8"></div>
<div style="left:214px;top:710px;width:1208px;height:1px;background:#c8c8c8"></div>
<div style="left:214px;top:733px;width:1208px;height:1px;background:#c8c8c8"></div>
<div style="left:214px;top:756px;width:1208px;height:1px;background:#c8c8c8"></div>
<div style="left:214px;top:779px;width:1208px;height:1px;background:#c8c8c8"></div>
<div style="left:261px;top:227px;width:1px;height:601px;background:#c8c8c8"></div>
<div style="left:289px;top:227px;width:1px;height:601px;background:#c8c8c8"></div>
<div style="left:417px;top:227px;width:1px;height:601px;background:#c8c8c8"></div>
<div style="left:470px;top:227px;width:1px;height:601px;background:#c8c8c8"></div>
<div style="left:528px;top:227px;width:1px;height:601px;background:#c8c8c8"></div>
<div style="left:672px;top:227px;width:1px;height:601px;background:#c8c8c8"></div>
<div style="left:749px;top:227px;width:1px;height:601px;background:#c8c8c8"></div>
<div style="left:787px;top:227px;width:1px;height:601px;background:#c8c8c8"></div>
<div style="left:864px;top:227px;width:1px;height:601px;background:#c8c8c8"></div>
<div style="left:939px;top:227px;width:1px;height:601px;background:#c8c8c8"></div>
<div style="left:1019px;top:227px;width:1px;height:601px;background:#c8c8c8"></div>
<div style="left:1112px;top:227px;width:1px;height:601px;background:#c8c8c8"></div>
<div style="left:1238px;top:227px;width:1px;height:601px;background:#c8c8c8"></div>
<div style="left:1339px;top:227px;width:1px;height:601px;background:#c8c8c8"></div>
<div style="left:215px;top:204px;width:47px;height:24px;border:1px solid;border-color:#fff #808080 #808080 #fff;"></div>
<div class="t" style="left:225px;top:209px;">序号</div>
<div style="left:262px;top:204px;width:28px;height:24px;border:1px solid;border-color:#fff #808080 #808080 #fff;"></div>
<div style="left:290px;top:204px;width:128px;height:24px;border:1px solid;border-color:#fff #808080 #808080 #fff;"></div>
<div class="t" style="left:329px;top:209px;">账户名称</div>
<div style="left:418px;top:204px;width:53px;height:24px;border:1px solid;border-color:#fff #808080 #808080 #fff;"></div>
<div class="t" style="left:425px;top:209px;">凭证字</div>
<div style="left:471px;top:204px;width:58px;height:24px;border:1px solid;border-color:#fff #808080 #808080 #fff;"></div>
<div class="t" style="left:481px;top:209px;">凭证号</div>
<div style="left:529px;top:204px;width:144px;height:24px;border:1px solid;border-color:#fff #808080 #808080 #fff;"></div>
<div class="t" style="left:588px;top:209px;">摘要</div>
<div style="left:673px;top:204px;width:77px;height:24px;border:1px solid;border-color:#fff #808080 #808080 #fff;"></div>
<div class="t" style="left:686px;top:209px;">发生日期</div>
<div style="left:750px;top:204px;width:38px;height:24px;border:1px solid;border-color:#fff #808080 #808080 #fff;"></div>
<div class="t" style="left:756px;top:209px;">方向</div>
<div style="left:788px;top:204px;width:77px;height:24px;border:1px solid;border-color:#fff #808080 #808080 #fff;"></div>
<div class="t" style="left:801px;top:209px;">借方金额</div>
<div style="left:865px;top:204px;width:75px;height:24px;border:1px solid;border-color:#fff #808080 #808080 #fff;"></div>
<div class="t" style="left:877px;top:209px;">贷方金额</div>
<div style="left:940px;top:204px;width:80px;height:24px;border:1px solid;border-color:#fff #808080 #808080 #fff;"></div>
<div class="t" style="left:967px;top:209px;">余额</div>
<div style="left:1020px;top:204px;width:93px;height:24px;border:1px solid;border-color:#fff #808080 #808080 #fff;"></div>
<div class="t" style="left:1053px;top:209px;">部门</div>
<div style="left:1113px;top:204px;width:126px;height:24px;border:1px solid;border-color:#fff #808080 #808080 #fff;"></div>
<div class="t" style="left:1157px;top:209px;">流水号</div>
<div style="left:1239px;top:204px;width:101px;height:24px;border:1px solid;border-color:#fff #808080 #808080 #fff;"></div>
<div class="t" style="left:1264px;top:209px;">对方科目</div>
<div style="left:1340px;top:204px;width:83px;height:24px;border:1px solid;border-color:#fff #808080 #808080 #fff;"></div>
<div class="t" style="left:1370px;top:209px;">对方单位</div>
<div style="left:203px;top:204px;width:12px;height:24px;border:1px solid;border-color:#fff #808080 #808080 #fff;"></div>
<div style="left:203px;top:228px;width:12px;height:23px;border:1px solid;border-color:#fff #808080 #808080 #fff;"></div>
<div style="left:203px;top:251px;width:12px;height:23px;border:1px solid;border-color:#fff #808080 #808080 #fff;"></div>
<div style="left:203px;top:274px;width:12px;height:23px;border:1px solid;border-color:#fff #808080 #808080 #fff;"></div>
<div style="left:203px;top:297px;width:12px;height:23px;border:1px solid;border-color:#fff #808080 #808080 #fff;"></div>
<div style="left:203px;top:320px;width:12px;height:23px;border:1px solid;border-color:#fff #808080 #808080 #fff;"></div>
<div style="left:203px;top:343px;width:12px;height:23px;border:1px solid;border-color:#fff #808080 #808080 #fff;"></div>
<div style="left:203px;top:366px;width:12px;height:23px;border:1px solid;border-color:#fff #808080 #808080 #fff;"></div>
<div style="left:203px;top:389px;width:12px;height:23px;border:1px solid;border-color:#fff #808080 #808080 #fff;"></div>
<div style="left:203px;top:412px;width:12px;height:23px;border:1px solid;border-color:#fff #808080 #808080 #fff;"></div>
<div style="left:203px;top:435px;width:12px;height:23px;border:1px solid;border-color:#fff #808080 #808080 #fff;"></div>
<div style="left:203px;top:458px;width:12px;height:23px;border:1px solid;border-color:#fff #808080 #808080 #fff;"></div>
<div style="left:203px;top:481px;width:12px;height:23px;border:1px solid;border-color:#fff #808080 #808080 #fff;"></div>
<div style="left:203px;top:504px;width:12px;height:23px;border:1px solid;border-color:#fff #808080 #808080 #fff;"></div>
<div style="left:203px;top:527px;width:12px;height:23px;border:1px solid;border-color:#fff #808080 #808080 #fff;"></div>
<div style="left:203px;top:550px;width:12px;height:23px;border:1px solid;border-color:#fff #808080 #808080 #fff;"></div>
<div style="left:203px;top:573px;width:12px;height:23px;border:1px solid;border-color:#fff #808080 #808080 #fff;"></div>
<div style="left:203px;top:596px;width:12px;height:23px;border:1px solid;border-color:#fff #808080 #808080 #fff;"></div>
<div style="left:203px;top:619px;width:12px;height:23px;border:1px solid;border-color:#fff #808080 #808080 #fff;"></div>
<div style="left:203px;top:642px;width:12px;height:23px;border:1px solid;border-color:#fff #808080 #808080 #fff;"></div>
<div style="left:203px;top:665px;width:12px;height:23px;border:1px solid;border-color:#fff #808080 #808080 #fff;"></div>
<div style="left:203px;top:688px;width:12px;height:23px;border:1px solid;border-color:#fff #808080 #808080 #fff;"></div>
<div style="left:203px;top:711px;width:12px;height:23px;border:1px solid;border-color:#fff #808080 #808080 #fff;"></div>
<div style="left:203px;top:734px;width:12px;height:23px;border:1px solid;border-color:#fff #808080 #808080 #fff;"></div>
<div style="left:203px;top:757px;width:12px;height:23px;border:1px solid;border-color:#fff #808080 #808080 #fff;"></div>
<div style="left:203px;top:780px;width:12px;height:25px;border:1px solid;border-color:#fff #808080 #808080 #fff;"></div>
<div style="left:203px;top:805px;width:12px;height:24px;border:1px solid;border-color:#fff #808080 #808080 #fff;"></div>
<svg style="left:268px;top:231px" width="15" height="15" viewBox="0 0 15 15"><circle cx="7.5" cy="7.5" r="6.8" fill="url(#gGray)" stroke="#707070" stroke-width="1"/>
<path d="M4.2 7.6 L6.6 10 L11 5.2" stroke="#fff" stroke-width="2" fill="none"/></svg>
<div class="t" style="left:234px;top:233px;color:#000"><span class="c">1</span></div>
<div class="t" style="left:295px;top:233px;color:#000">现金</div>
<div class="t" style="left:437px;top:233px;color:#000">付</div>
<div class="t" style="left:490px;top:233px;color:#000"><span class="c">0</span><span class="c">0</span><span class="c">6</span></div>
<div class="t" style="left:534px;top:233px;color:#000">二部发货费用</div>
<div class="t" style="left:680px;top:233px;color:#000"><span class="c">2</span><span class="c">0</span><span class="c">1</span><span class="c">1</span><span class="c">-</span><span class="c">0</span><span class="c">8</span><span class="c">-</span><span class="c">2</span><span class="c">5</span></div>
<div class="t" style="left:762px;top:233px;color:#000">借</div>
<div class="t" style="left:793px;top:233px;color:#000"><span class="c">0</span></div>
<div class="t" style="left:870px;top:233px;color:#000"><span class="c">3</span><span class="c">4</span><span class="c">4</span></div>
<div class="t" style="left:945px;top:233px;color:#000"><span class="c">1</span><span class="c">8</span><span class="c">3</span><span class="c">2</span><span class="c">9</span><span class="c">.</span><span class="c">0</span><span class="c">2</span></div>
<div class="t" style="left:1124px;top:233px;color:#000"><span class="c m">C</span><span class="c m">W</span><span class="c">-</span><span class="c">2</span><span class="c">0</span><span class="c">1</span><span class="c">1</span><span class="c">0</span><span class="c">8</span><span class="c">2</span><span class="c">5</span><span class="c">-</span><span class="c">0</span><span class="c">7</span><span class="c">1</span><span class="c">0</span><span class="c">9</span></div>
<div class="t" style="left:1244px;top:233px;color:#000">采购成本</div>
<svg style="left:268px;top:254px" width="15" height="15" viewBox="0 0 15 15"><circle cx="7.5" cy="7.5" r="6.8" fill="url(#gGray)" stroke="#707070" stroke-width="1"/>
<path d="M4.2 7.6 L6.6 10 L11 5.2" stroke="#fff" stroke-width="2" fill="none"/></svg>
<div class="t" style="left:234px;top:256px;color:#000"><span class="c">2</span></div>
<div class="t" style="left:295px;top:256px;color:#000">现金</div>
<div class="t" style="left:437px;top:256px;color:#000">收</div>
<div class="t" style="left:490px;top:256px;color:#000"><span class="c">0</span><span class="c">0</span><span class="c">5</span></div>
<div class="t" style="left:534px;top:256px;color:#000"><span class="c m">c</span><span class="c m">x</span><span class="c m">v</span><span class="c m">x</span><span class="c m">c</span></div>
<div class="t" style="left:680px;top:256px;color:#000"><span class="c">2</span><span class="c">0</span><span class="c">1</span><span class="c">1</span><span class="c">-</span><span class="c">0</span><span class="c">8</span><span class="c">-</span><span class="c">1</span><span class="c">9</span></div>
<div class="t" style="left:762px;top:256px;color:#000">借</div>
<div class="t" style="left:793px;top:256px;color:#000"><span class="c">9</span><span class="c">0</span></div>
<div class="t" style="left:870px;top:256px;color:#000"><span class="c">0</span></div>
<div class="t" style="left:945px;top:256px;color:#000"><span class="c">1</span><span class="c">8</span><span class="c">6</span><span class="c">7</span><span class="c">3</span><span class="c">.</span><span class="c">0</span><span class="c">2</span></div>
<div class="t" style="left:1124px;top:256px;color:#000"><span class="c m">C</span><span class="c m">W</span><span class="c">-</span><span class="c">2</span><span class="c">0</span><span class="c">1</span><span class="c">1</span><span class="c">0</span><span class="c">8</span><span class="c">1</span><span class="c">9</span><span class="c">-</span><span class="c">0</span><span class="c">7</span><span class="c">1</span><span class="c">0</span><span class="c">8</span></div>
<div class="t" style="left:1244px;top:256px;color:#000">销售费用</div>
<svg style="left:268px;top:277px" width="15" height="15" viewBox="0 0 15 15"><circle cx="7.5" cy="7.5" r="6.8" fill="url(#gGray)" stroke="#707070" stroke-width="1"/>
<path d="M4.2 7.6 L6.6 10 L11 5.2" stroke="#fff" stroke-width="2" fill="none"/></svg>
<div class="t" style="left:234px;top:279px;color:#000"><span class="c">3</span></div>
<div class="t" style="left:295px;top:279px;color:#000">现金</div>
<div class="t" style="left:437px;top:279px;color:#000">银</div>
<div class="t" style="left:490px;top:279px;color:#000"><span class="c">0</span><span class="c">0</span><span class="c">4</span></div>
<div class="t" style="left:534px;top:279px;color:#000">水禽部发货费用</div>
<div class="t" style="left:680px;top:279px;color:#000"><span class="c">2</span><span class="c">0</span><span class="c">1</span><span class="c">1</span><span class="c">-</span><span class="c">0</span><span class="c">8</span><span class="c">-</span><span class="c">0</span><span class="c">3</span></div>
<div class="t" style="left:762px;top:279px;color:#000">借</div>
<div class="t" style="left:793px;top:279px;color:#000"><span class="c">5</span><span class="c">0</span><span class="c">0</span><span class="c">0</span></div>
<div class="t" style="left:870px;top:279px;color:#000"><span class="c">0</span></div>
<div class="t" style="left:945px;top:279px;color:#000"><span class="c">1</span><span class="c">8</span><span class="c">5</span><span class="c">8</span><span class="c">3</span><span class="c">.</span><span class="c">0</span><span class="c">2</span></div>
<div class="t" style="left:1124px;top:279px;color:#000"><span class="c m">C</span><span class="c m">W</span><span class="c">-</span><span class="c">2</span><span class="c">0</span><span class="c">1</span><span class="c">1</span><span class="c">0</span><span class="c">8</span><span class="c">0</span><span class="c">3</span><span class="c">-</span><span class="c">0</span><span class="c">7</span><span class="c">1</span><span class="c">0</span><span class="c">6</span></div>
<div class="t" style="left:1244px;top:279px;color:#000">收支科目</div>
<div class="t" style="left:1345px;top:279px;color:#000">郑州金瑞</div>
<svg style="left:268px;top:300px" width="15" height="15" viewBox="0 0 15 15"><circle cx="7.5" cy="7.5" r="6.8" fill="url(#gGray)" stroke="#707070" stroke-width="1"/>
<path d="M4.2 7.6 L6.6 10 L11 5.2" stroke="#fff" stroke-width="2" fill="none"/></svg>
<div class="t" style="left:234px;top:302px;color:#000"><span class="c">4</span></div>
<div class="t" style="left:295px;top:302px;color:#000">现金</div>
<div class="t" style="left:437px;top:302px;color:#000">银</div>
<div class="t" style="left:490px;top:302px;color:#000"><span class="c">0</span><span class="c">0</span><span class="c">3</span></div>
<div class="t" style="left:534px;top:302px;color:#000">猪药部发货费用</div>
<div class="t" style="left:680px;top:302px;color:#000"><span class="c">2</span><span class="c">0</span><span class="c">1</span><span class="c">1</span><span class="c">-</span><span class="c">0</span><span class="c">8</span><span class="c">-</span><span class="c">0</span><span class="c">3</span></div>
<div class="t" style="left:762px;top:302px;color:#000">借</div>
<div class="t" style="left:793px;top:302px;color:#000"><span class="c">1</span><span class="c">2</span><span class="c">0</span><span class="c">0</span></div>
<div class="t" style="left:870px;top:302px;color:#000"><span class="c">0</span></div>
<div class="t" style="left:945px;top:302px;color:#000"><span class="c">1</span><span class="c">3</span><span class="c">5</span><span class="c">8</span><span class="c">3</span><span class="c">.</span><span class="c">0</span><span class="c">2</span></div>
<div class="t" style="left:1025px;top:302px;color:#000">技术部</div>
<div class="t" style="left:1124px;top:302px;color:#000"><span class="c m">C</span><span class="c m">W</span><span class="c">-</span><span class="c">2</span><span class="c">0</span><span class="c">1</span><span class="c">1</span><span class="c">0</span><span class="c">8</span><span class="c">0</span><span class="c">3</span><span class="c">-</span><span class="c">0</span><span class="c">7</span><span class="c">1</span><span class="c">0</span><span class="c">5</span></div>
<div class="t" style="left:1244px;top:302px;color:#000">人工成本</div>
<div style="left:215px;top:320px;width:1207px;height:22px;background:#316ac5"></div>
<div style="left:261px;top:320px;width:1px;height:22px;background:#c8c8c8"></div>
<div style="left:289px;top:320px;width:1px;height:22px;background:#c8c8c8"></div>
<div style="left:417px;top:320px;width:1px;height:22px;background:#c8c8c8"></div>
<div style="left:470px;top:320px;width:1px;height:22px;background:#c8c8c8"></div>
<div style="left:528px;top:320px;width:1px;height:22px;background:#c8c8c8"></div>
<div style="left:672px;top:320px;width:1px;height:22px;background:#c8c8c8"></div>
<div style="left:749px;top:320px;width:1px;height:22px;background:#c8c8c8"></div>
<div style="left:787px;top:320px;width:1px;height:22px;background:#c8c8c8"></div>
<div style="left:864px;top:320px;width:1px;height:22px;background:#c8c8c8"></div>
<div style="left:939px;top:320px;width:1px;height:22px;background:#c8c8c8"></div>
<div style="left:1019px;top:320px;width:1px;height:22px;background:#c8c8c8"></div>
<div style="left:1112px;top:320px;width:1px;height:22px;background:#c8c8c8"></div>
<div style="left:1238px;top:320px;width:1px;height:22px;background:#c8c8c8"></div>
<div style="left:1339px;top:320px;width:1px;height:22px;background:#c8c8c8"></div>
<div style="left:215px;top:320px;width:1207px;height:22px;border:1px dotted #d49a2a;"></div>
<svg style="left:206px;top:325px" width="7" height="12"><path d="M0 0 L6 6 L0 12 Z" fill="#000"/></svg>
<svg style="left:268px;top:323px" width="15" height="15" viewBox="0 0 15 15"><circle cx="7.5" cy="7.5" r="6.8" fill="url(#gGray)" stroke="#707070" stroke-width="1"/>
<path d="M4.2 7.6 L6.6 10 L11 5.2" stroke="#316ac5" stroke-width="2" fill="none"/></svg>
<div class="t" style="left:234px;top:325px;color:#fff"><span class="c">5</span></div>
<div class="t" style="left:295px;top:325px;color:#fff">现金</div>
<div class="t" style="left:437px;top:325px;color:#fff">收</div>
<div class="t" style="left:490px;top:325px;color:#fff"><span class="c">0</span><span class="c">0</span><span class="c">2</span></div>
<div class="t" style="left:534px;top:325px;color:#fff">科技部发货费用</div>
<div class="t" style="left:680px;top:325px;color:#fff"><span class="c">2</span><span class="c">0</span><span class="c">1</span><span class="c">1</span><span class="c">-</span><span class="c">0</span><span class="c">8</span><span class="c">-</span><span class="c">0</span><span class="c">3</span></div>
<div class="t" style="left:762px;top:325px;color:#fff">借</div>
<div class="t" style="left:793px;top:325px;color:#fff"><span class="c">-</span><span class="c">5</span></div>
<div class="t" style="left:870px;top:325px;color:#fff"><span class="c">0</span></div>
<div class="t" style="left:945px;top:325px;color:#fff"><span class="c">1</span><span class="c">2</span><span class="c">3</span><span class="c">8</span><span class="c">3</span><span class="c">.</span><span class="c">0</span><span class="c">2</span></div>
<div class="t" style="left:1124px;top:325px;color:#fff"><span class="c m">C</span><span class="c m">W</span><span class="c">-</span><span class="c">2</span><span class="c">0</span><span class="c">1</span><span class="c">1</span><span class="c">0</span><span class="c">8</span><span class="c">0</span><span class="c">3</span><span class="c">-</span><span class="c">0</span><span class="c">7</span><span class="c">1</span><span class="c">0</span><span class="c">4</span></div>
<div class="t" style="left:1244px;top:325px;color:#fff">成本</div>
<svg style="left:268px;top:346px" width="15" height="15" viewBox="0 0 15 15"><circle cx="7.5" cy="7.5" r="6.8" fill="url(#gGray)" stroke="#707070" stroke-width="1"/>
<path d="M4.2 7.6 L6.6 10 L11 5.2" stroke="#fff" stroke-width="2" fill="none"/></svg>
<div class="t" style="left:234px;top:348px;color:#000"><span class="c">6</span></div>
<div class="t" style="left:295px;top:348px;color:#000">现金</div>
<div class="t" style="left:437px;top:348px;color:#000">银</div>
<div class="t" style="left:490px;top:348px;color:#000"><span class="c">0</span><span class="c">0</span><span class="c">1</span></div>
<div class="t" style="left:534px;top:348px;color:#000">一部技术员工资</div>
<div class="t" style="left:680px;top:348px;color:#000"><span class="c">2</span><span class="c">0</span><span class="c">1</span><span class="c">1</span><span class="c">-</span><span class="c">0</span><span class="c">8</span><span class="c">-</span><span class="c">0</span><span class="c">3</span></div>
<div class="t" style="left:762px;top:348px;color:#000">借</div>
<div class="t" style="left:793px;top:348px;color:#000"><span class="c">6</span><span class="c">0</span><span class="c">0</span></div>
<div class="t" style="left:870px;top:348px;color:#000"><span class="c">0</span></div>
<div class="t" style="left:945px;top:348px;color:#000"><span class="c">1</span><span class="c">2</span><span class="c">3</span><span class="c">8</span><span class="c">8</span><span class="c">.</span><span class="c">0</span><span class="c">2</span></div>
<div class="t" style="left:1124px;top:348px;color:#000"><span class="c m">C</span><span class="c m">W</span><span class="c">-</span><span class="c">2</span><span class="c">0</span><span class="c">1</span><span class="c">1</span><span class="c">0</span><span class="c">8</span><span class="c">0</span><span class="c">3</span><span class="c">-</span><span class="c">0</span><span class="c">7</span><span class="c">1</span><span class="c">0</span><span class="c">3</span></div>
<div class="t" style="left:1244px;top:348px;color:#000">销售费用</div>
<div style="left:214px;top:804px;width:1208px;height:2px;background:#b4b4b4"></div>
<div class="t" style="left:790px;top:808px;"><span class="c">6</span><span class="c">8</span><span class="c">8</span><span class="c">5</span></div>
<div class="t" style="left:867px;top:808px;"><span class="c">3</span><span class="c">4</span><span class="c">4</span></div>
<div style="left:214px;top:828px;width:1208px;height:1px;background:#b8b8b8"></div>
<div style="left:203px;top:829px;width:1219px;height:17px;background:linear-gradient(#f3f1ec,#fefefe 60%,#f0efe8);"></div>
<div style="left:203px;top:830px;width:16px;height:16px;background:linear-gradient(135deg,#dce6fd,#b8cdf8);border:1px solid #fff;border-bottom-color:#8cacec;border-radius:2px;"></div>
<div style="left:220px;top:830px;width:17px;height:16px;background:linear-gradient(135deg,#dce6fd,#b8cdf8);border:1px solid #fff;border-bottom-color:#8cacec;border-radius:2px;"></div>
<div style="left:1405px;top:830px;width:17px;height:16px;background:linear-gradient(135deg,#dce6fd,#b8cdf8);border:1px solid #fff;border-bottom-color:#8cacec;border-radius:2px;"></div>
<svg style="left:207px;top:834px" width="8" height="9"><path d="M6 1 L2 4.5 L6 8" stroke="#4d6185" stroke-width="2" fill="none"/></svg>
<svg style="left:1410px;top:834px" width="8" height="9"><path d="M2 1 L6 4.5 L2 8" stroke="#4d6185" stroke-width="2" fill="none"/></svg>
<div style="left:1422px;top:204px;width:16px;height:625px;background:linear-gradient(90deg,#eeede5,#fcfcfa 60%,#f2f1ea);"></div>
<div style="left:1423px;top:205px;width:15px;height:16px;background:linear-gradient(135deg,#dce6fd,#b8cdf8);border:1px solid #a8bfec;border-radius:2px;"></div>
<div style="left:1423px;top:300px;width:15px;height:491px;background:linear-gradient(90deg,#cad8fb,#bccdf8);border:1px solid #a8bfec;border-radius:2px;"></div>
<div style="left:1427px;top:541px;width:7px;height:1px;background:#fff"></div>
<div style="left:1428px;top:542px;width:7px;height:1px;background:#8cb0f8"></div>
<div style="left:1427px;top:543px;width:7px;height:1px;background:#fff"></div>
<div style="left:1428px;top:544px;width:7px;height:1px;background:#8cb0f8"></div>
<div style="left:1427px;top:545px;width:7px;height:1px;background:#fff"></div>
<div style="left:1428px;top:546px;width:7px;height:1px;background:#8cb0f8"></div>
<div style="left:1427px;top:547px;width:7px;height:1px;background:#fff"></div>
<div style="left:1428px;top:548px;width:7px;height:1px;background:#8cb0f8"></div>
<div style="left:224px;top:834px;width:1px;height:8px;background:#fff"></div>
<div style="left:225px;top:835px;width:1px;height:8px;background:#8cb0f8"></div>
<div style="left:226px;top:834px;width:1px;height:8px;background:#fff"></div>
<div style="left:227px;top:835px;width:1px;height:8px;background:#8cb0f8"></div>
<div style="left:228px;top:834px;width:1px;height:8px;background:#fff"></div>
<div style="left:229px;top:835px;width:1px;height:8px;background:#8cb0f8"></div>
<div style="left:230px;top:834px;width:1px;height:8px;background:#fff"></div>
<div style="left:231px;top:835px;width:1px;height:8px;background:#8cb0f8"></div>
<div style="left:1423px;top:813px;width:15px;height:16px;background:linear-gradient(135deg,#dce6fd,#b8cdf8);border:1px solid #a8bfec;border-radius:2px;"></div>
<svg style="left:1426px;top:209px" width="9" height="8"><path d="M1 6 L4.5 2 L8 6" stroke="#4d6185" stroke-width="2" fill="none"/></svg>
<svg style="left:1426px;top:817px" width="9" height="8"><path d="M1 2 L4.5 6 L8 2" stroke="#4d6185" stroke-width="2" fill="none"/></svg>
<div style="left:1422px;top:829px;width:17px;height:17px;background:#ece9d8;border-left:1px solid #404040;border-top:1px solid #404040;"></div>
<div style="left:0px;top:849px;width:200px;height:20px;border-style:solid;border-width:1px 1px 0 1px;border-color:#aca899 #fff #fff #aca899;"></div>
<div style="left:202px;top:849px;width:148px;height:20px;border-style:solid;border-width:1px 1px 0 1px;border-color:#aca899 #fff #fff #aca899;"></div>
<div style="left:352px;top:849px;width:118px;height:20px;border-style:solid;border-width:1px 1px 0 1px;border-color:#aca899 #fff #fff #aca899;"></div>
<div style="left:472px;top:849px;width:218px;height:20px;border-style:solid;border-width:1px 1px 0 1px;border-color:#aca899 #fff #fff #aca899;"></div>
<div style="left:692px;top:849px;width:749px;height:20px;border-style:solid;border-width:1px 1px 0 1px;border-color:#aca899 #fff #fff #aca899;"></div>
<div class="t" style="left:13px;top:853px;">欢迎使用红管家财务出纳记帐系统</div>
<div class="t" style="left:215px;top:853px;">当前用户：系统管理员</div>
<div class="t" style="left:368px;top:853px;"><span class="c">2</span><span class="c">0</span><span class="c">1</span><span class="c">1</span>年<span class="c">0</span><span class="c">8</span>月<span class="c">2</span><span class="c">9</span>日</div>
<div style="left:472px;top:849px;width:217px;height:20px;overflow:hidden"><div class="t" style="left:7px;top:4px">帐套名称：还原帐套，请在帐套选项功能</div></div>
<div class="t" style="left:700px;top:853px;">授权许可方式：注册码版<span class="c">&nbsp;</span>授权给：亚拓软件</div>
<div style="left:0px;top:869px;width:1440px;height:1px;background:#fff"></div>
<div style="left:0px;top:870px;width:1440px;height:4px;background:linear-gradient(#2a62d6 0,#2a62d6 1px,#4a90e8 1px,#3c82e2 4px);"></div>
<div style="left:1183px;top:870px;width:2px;height:4px;background:#1c3c80"></div>
<div style="left:1185px;top:870px;width:255px;height:4px;background:linear-gradient(#0a58c8 0,#0a58c8 1px,#1ab8f4 1px,#14b0f0 4px);"></div>
<div style="left:0px;top:870px;width:93px;height:4px;background:linear-gradient(#2e7a2e 0,#2e7a2e 1px,#5aa85a 1px,#4c9c4c 4px);"></div>
</body></html>
